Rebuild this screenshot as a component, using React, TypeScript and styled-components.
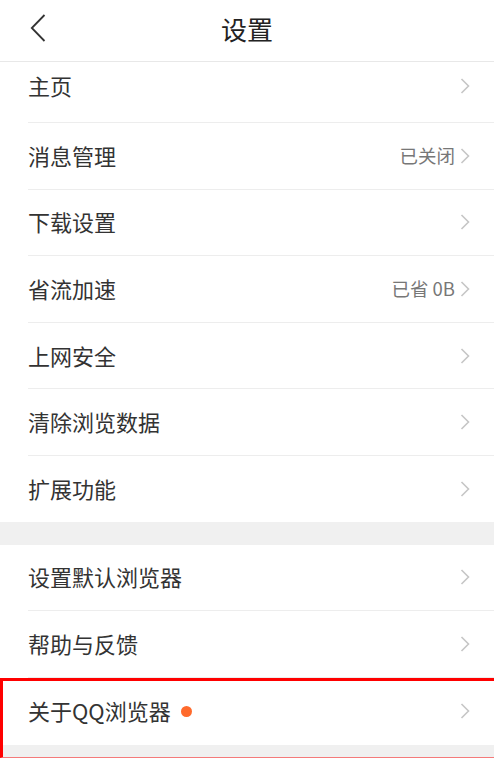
import React from 'react'
import styled, { createGlobalStyle } from 'styled-components'

const GlobalStyle = createGlobalStyle`
  html, body {
    margin: 0;
    padding: 0;
    background: #ffffff;
  }
  body {
    font-family: "Noto Sans CJK SC", "Noto Sans", sans-serif;
    color: #333333;
  }
`

type Item = { label: string; value?: string; dot?: boolean }

const groupOne: Item[] = [
  { label: '消息管理', value: '已关闭' },
  { label: '下载设置' },
  { label: '省流加速', value: '已省 0B' },
  { label: '上网安全' },
  { label: '清除浏览数据' },
  { label: '扩展功能' },
]

const groupTwo: Item[] = [{ label: '设置默认浏览器' }, { label: '帮助与反馈' }]

const Chevron = () => (
  <svg width='10' height='16' viewBox='0 0 10 16'>
    <path d='M1.5 1 L8.5 8 L1.5 15' fill='none' stroke='#c6c6c6' strokeWidth='1.6' />
  </svg>
)

const Row = ({ item, last, height = 65.6, lift = 0 }: { item: Item; last?: boolean; height?: number; lift?: number }) => (
  <RowWrap $last={last} $height={height} $lift={lift}>
    <Label>
      {item.label}
      {item.dot && <Dot />}
    </Label>
    <Right>
      {item.value && <Value>{item.value}</Value>}
      <Chevron />
    </Right>
  </RowWrap>
)

const App = () => {
  return (
    <Page>
      <GlobalStyle />
      <Header>
        <Back>
          <svg width='16' height='28' viewBox='0 0 16 28'>
            <path d='M14.5 1 L1.8 14 L14.5 27' fill='none' stroke='#333' strokeWidth='1.8' />
          </svg>
        </Back>
        <Title>设置</Title>
      </Header>

      <Group>
        <Row item={{ label: '主页' }} height={60} lift={6} />
        {groupOne.map((item, i) => (
          <Row key={item.label} item={item} last={i === groupOne.length - 1} />
        ))}
      </Group>

      <Gap />

      <Group>
        {groupTwo.map((item) => (
          <Row key={item.label} item={item} />
        ))}
        {/* red annotation box drawn over the last row */}
        <Highlight>
          <Row item={{ label: '关于QQ浏览器', dot: true }} last height={67} />
          <BottomFill />
        </Highlight>
      </Group>
    </Page>
  )
}

export default App

const Page = styled.div`
  width: 494px;
  height: 758px;
  overflow: hidden;
  background: #ffffff;
`

const Header = styled.div`
  position: relative;
  height: 61px;
  border-bottom: 1px solid #e8e8e8;
  display: flex;
  align-items: center;
  justify-content: center;
`

const Back = styled.div`
  position: absolute;
  left: 30px;
  top: 14px;
  width: 16px;
  height: 28px;
  display: flex;
`

const Title = styled.div`
  font-size: 26px;
  color: #222222;
  line-height: 1;
  margin-top: -4px;
`

const Group = styled.div`
  background: #ffffff;
`

const RowWrap = styled.div<{ $last?: boolean; $height: number; $lift: number }>`
  height: ${(p) => p.$height}px;
  box-sizing: content-box;
  margin-left: 28px;
  padding-right: 24px;
  padding-bottom: ${(p) => p.$lift}px;
  margin-top: ${(p) => -p.$lift}px;
  display: flex;
  align-items: center;
  justify-content: space-between;
  border-bottom: ${(p) => (p.$last ? 'none' : '1px solid #ededed')};
`

const Label = styled.div`
  display: flex;
  align-items: center;
  font-size: 22px;
  color: #333333;
  line-height: 1;
  margin-top: -2px;
`

const Dot = styled.span`
  width: 11px;
  height: 11px;
  border-radius: 50%;
  background: #ff6a2c;
  margin-left: 10px;
  margin-top: 2px;
`

const Right = styled.div`
  display: flex;
  align-items: center;
  gap: 5px;
`

const Value = styled.span`
  font-size: 18.5px;
  color: #777777;
  line-height: 1;
  margin-top: -2px;
`

const Gap = styled.div`
  height: 23px;
  background: #f0f0f0;
`

const Highlight = styled.div`
  position: relative;

  &::after {
    content: '';
    position: absolute;
    left: 0;
    top: 0;
    right: -4px;
    bottom: 0;
    border-top: 3px solid #ff0000;
    border-left: 3px solid #ff0000;
    border-bottom: 1px solid #f47a7a;
    pointer-events: none;
  }
`

const BottomFill = styled.div`
  height: 13px;
  background: #f0f0f0;
`
